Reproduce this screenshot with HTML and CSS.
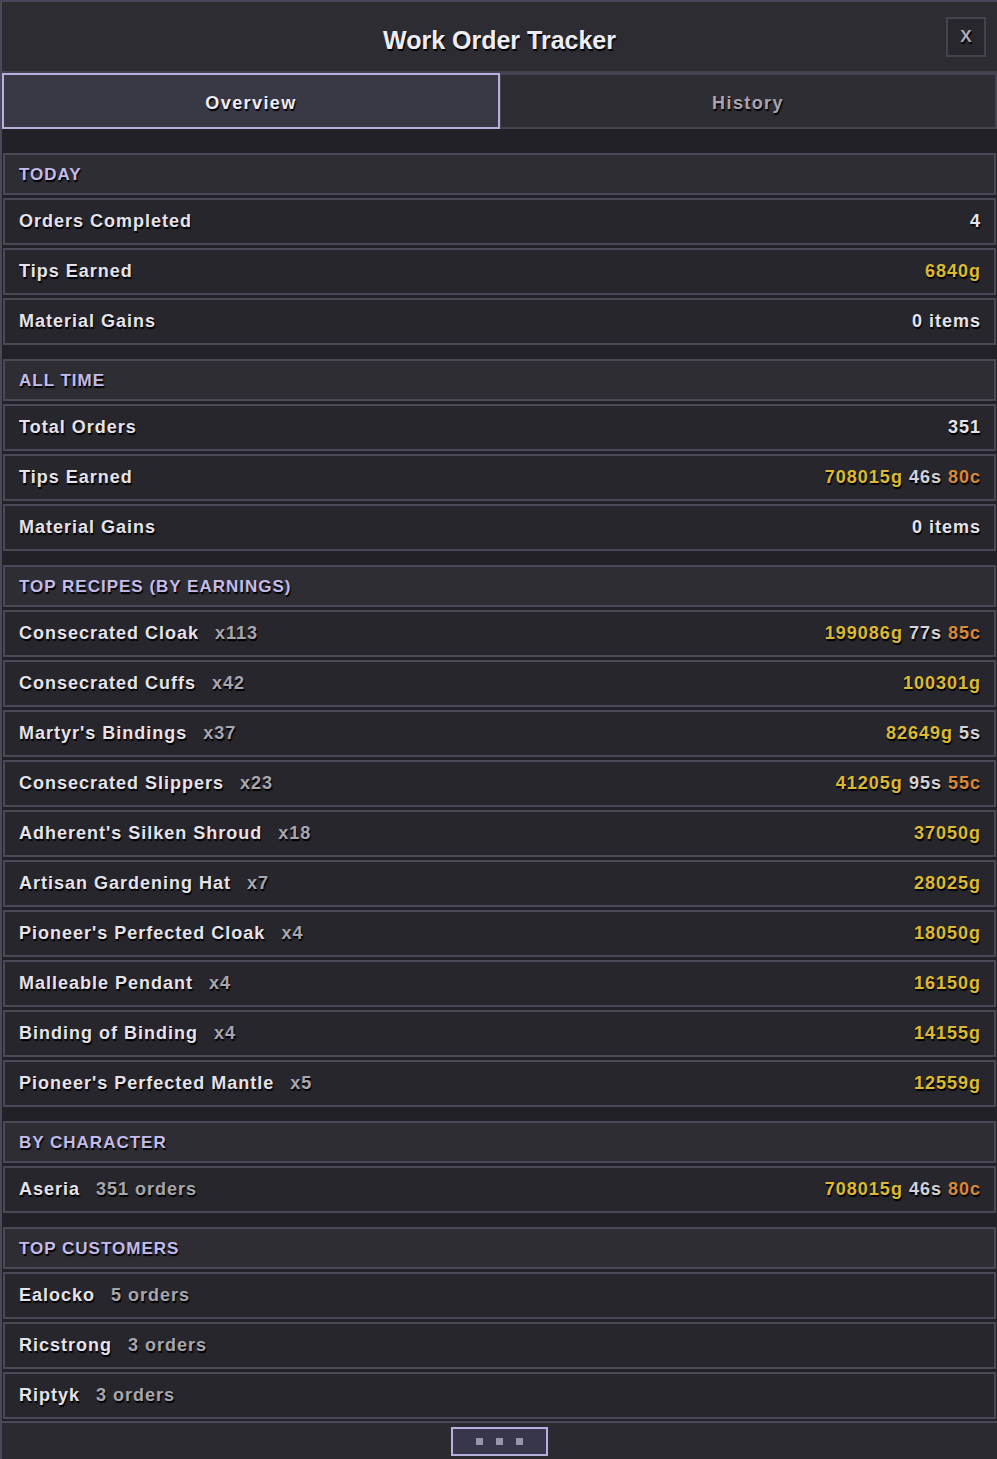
FILE: index.html
```html
<!DOCTYPE html>
<html>
<head>
    <meta charset="UTF-8">
    <title>Work Order Tracker</title>
    <link rel="stylesheet" href="styles.css">
</head>
<body>
    <div class="window">
        <div class="title-bar">
            <span class="title">Work Order Tracker</span>
            <button class="btn-close" title="Close">X</button>
        </div>
        <div class="tabs">
            <div class="tab tab-active">Overview</div>
            <div class="tab">History</div>
        </div>

        <div class="content">
            <div class="section">
                <div class="section-head">Today</div>
                <div class="row"><span class="name">Orders Completed</span><span class="value">4</span></div>
                <div class="row"><span class="name">Tips Earned</span><span class="value"><span class="gold">6840g</span></span></div>
                <div class="row"><span class="name">Material Gains</span><span class="value">0 items</span></div>
            </div>

            <div class="section">
                <div class="section-head">All Time</div>
                <div class="row"><span class="name">Total Orders</span><span class="value">351</span></div>
                <div class="row"><span class="name">Tips Earned</span><span class="value"><span class="gold">708015g</span> <span class="silver">46s</span> <span class="copper">80c</span></span></div>
                <div class="row"><span class="name">Material Gains</span><span class="value">0 items</span></div>
            </div>

            <div class="section">
                <div class="section-head">Top Recipes (By Earnings)</div>
                <div class="row"><span class="name">Consecrated Cloak<span class="count">x113</span></span><span class="value"><span class="gold">199086g</span> <span class="silver">77s</span> <span class="copper">85c</span></span></div>
                <div class="row"><span class="name">Consecrated Cuffs<span class="count">x42</span></span><span class="value"><span class="gold">100301g</span></span></div>
                <div class="row"><span class="name">Martyr's Bindings<span class="count">x37</span></span><span class="value"><span class="gold">82649g</span> <span class="silver">5s</span></span></div>
                <div class="row"><span class="name">Consecrated Slippers<span class="count">x23</span></span><span class="value"><span class="gold">41205g</span> <span class="silver">95s</span> <span class="copper">55c</span></span></div>
                <div class="row"><span class="name">Adherent's Silken Shroud<span class="count">x18</span></span><span class="value"><span class="gold">37050g</span></span></div>
                <div class="row"><span class="name">Artisan Gardening Hat<span class="count">x7</span></span><span class="value"><span class="gold">28025g</span></span></div>
                <div class="row"><span class="name">Pioneer's Perfected Cloak<span class="count">x4</span></span><span class="value"><span class="gold">18050g</span></span></div>
                <div class="row"><span class="name">Malleable Pendant<span class="count">x4</span></span><span class="value"><span class="gold">16150g</span></span></div>
                <div class="row"><span class="name">Binding of Binding<span class="count">x4</span></span><span class="value"><span class="gold">14155g</span></span></div>
                <div class="row"><span class="name">Pioneer's Perfected Mantle<span class="count">x5</span></span><span class="value"><span class="gold">12559g</span></span></div>
            </div>

            <div class="section">
                <div class="section-head">By Character</div>
                <div class="row"><span class="name">Aseria<span class="count">351 orders</span></span><span class="value"><span class="gold">708015g</span> <span class="silver">46s</span> <span class="copper">80c</span></span></div>
            </div>

            <div class="section">
                <div class="section-head">Top Customers</div>
                <div class="row"><span class="name">Ealocko<span class="count">5 orders</span></span></div>
                <div class="row"><span class="name">Ricstrong<span class="count">3 orders</span></span></div>
                <div class="row"><span class="name">Riptyk<span class="count">3 orders</span></span></div>
            </div>
        </div>

        <div class="footer">
            <button class="btn-more" title="More"><i></i><i></i><i></i></button>
        </div>
    </div>
</body>
</html>
```

FILE: styles.css
```css
html, body {
    margin: 0;
    padding: 0;
    width: 100%;
    height: 100%;
    background: #1f1e24;
}

body {
    font-family: "Liberation Sans", Arial, sans-serif;
    font-weight: bold;
    color: #e4e2ea;
    text-shadow: 1px 2px 1px #000;
    -webkit-user-select: none;
}

.window {
    display: flex;
    flex-direction: column;
    height: 1459px;
    box-sizing: border-box;
    border-top: 2px solid #4a4858;
    border-left: 2px solid #4a4858;
    background: #222127;
    overflow: hidden;
}

.title-bar {
    position: relative;
    display: flex;
    align-items: center;
    justify-content: center;
    height: 69px;
    flex-shrink: 0;
    background: #2d2c33;
    border-bottom: 2px solid #45434f;
}

.title {
    font-size: 25px;
    color: #eeecf4;
    padding-top: 7px;
}

.btn-close {
    position: absolute;
    right: 11px;
    top: 15px;
    width: 40px;
    height: 40px;
    box-sizing: border-box;
    border: 2px solid #45434f;
    background: #28272d;
    color: #aeacb6;
    font-family: "Liberation Sans", Arial, sans-serif;
    font-weight: bold;
    font-size: 17px;
    text-shadow: 1px 2px 1px #000;
    outline: none;
    padding: 0;
}

.tabs {
    display: flex;
    height: 56px;
    flex-shrink: 0;
}

.tab {
    flex: 1;
    display: flex;
    align-items: center;
    justify-content: center;
    box-sizing: border-box;
    padding-top: 5px;
    border: 2px solid #45434f;
    border-left-width: 1px;
    background: #2e2d34;
    color: #a6a4b0;
    font-size: 18px;
    letter-spacing: 1.4px;
}

.tab-active {
    border: 2px solid #b7b0de;
    background: #393845;
    color: #eeecf4;
}

.content {
    flex: 1 1 0;
    min-height: 0;
    overflow: hidden;
    padding: 24px 0 0 1px;
}

.section {
    margin-bottom: 14px;
}

.section:last-child {
    margin-bottom: 0;
}

.section-head,
.row {
    display: flex;
    align-items: center;
    justify-content: space-between;
    box-sizing: border-box;
    margin: 0 1px 3px 0;
    padding: 0 13px 0 14px;
    border: 2px solid #4a4958;
    letter-spacing: 1px;
}

.section-head {
    height: 42px;
    padding-top: 2px;
    background: #2e2d34;
    color: #c3bbea;
    font-size: 17px;
    text-transform: uppercase;
}

.row {
    height: 47px;
    background: #27262c;
    font-size: 18px;
}

.count {
    margin-left: 16px;
    color: #a7a5ad;
}

.gold {
    color: #dcb932;
}

.silver {
    color: #d2d2d8;
}

.copper {
    color: #d8883a;
}

.footer {
    display: flex;
    justify-content: center;
    height: 38px;
    flex-shrink: 0;
    box-sizing: border-box;
    padding-top: 4px;
    background: #2b2a31;
    border-top: 2px solid #4a4958;
}

.btn-more {
    display: flex;
    align-items: center;
    justify-content: center;
    gap: 13px;
    width: 97px;
    height: 29px;
    box-sizing: border-box;
    border: 2px solid #b7b0de;
    background: #37364a;
    outline: none;
    padding: 0;
}

.btn-more i {
    display: block;
    width: 7px;
    height: 7px;
    background: #9896a6;
}
```
